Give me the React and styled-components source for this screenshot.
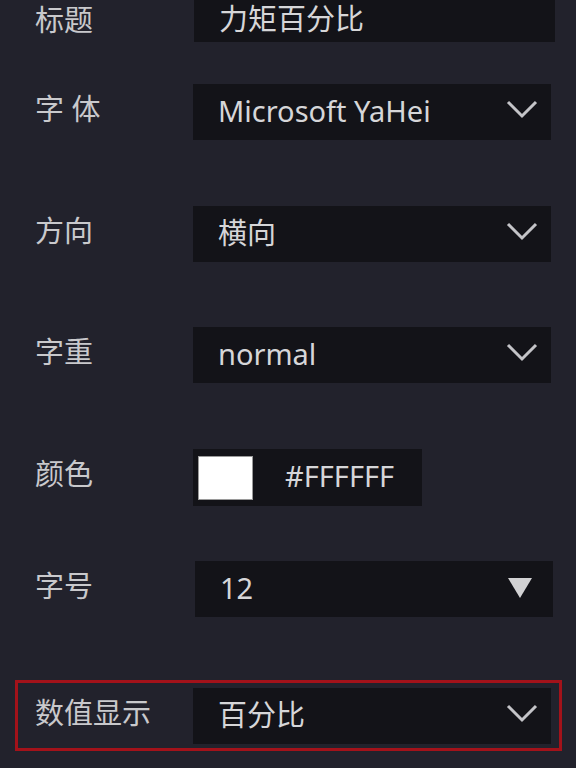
import React from 'react'
import styled, { createGlobalStyle } from 'styled-components'

const GlobalStyle = createGlobalStyle`
  html, body {
    margin: 0;
    padding: 0;
    background: #22222c;
    overflow: hidden;
  }
  body {
    font-family: "Noto Sans", "Noto Sans CJK SC", sans-serif;
  }
`

const Panel = styled.div`
  width: 576px;
  height: 768px;
  overflow: hidden;
  background: #22222c;
`

const Row = styled.div`
  display: flex;
  align-items: center;
  margin-top: ${(p) => p.$top}px;
  margin-left: ${(p) => (p.$hl ? 15 : 0)}px;
  width: ${(p) => (p.$hl ? 547 : 576)}px;
  box-sizing: border-box;
  padding: ${(p) => (p.$hl ? '5px 0 4px 17px' : '0 0 0 35px')};
  border: ${(p) => (p.$hl ? '3px solid #a3121a' : 'none')};
`

const Label = styled.div`
  width: 158px;
  flex: none;
  font-size: 29px;
  color: #c9c9cc;
  line-height: 1;
  margin-top: ${(p) => p.$lift ?? -8}px;
  white-space: pre;
`

const Box = styled.div`
  display: flex;
  align-items: center;
  box-sizing: border-box;
  width: ${(p) => p.$w || 358}px;
  height: ${(p) => p.$h || 56}px;
  margin-left: ${(p) => p.$shift || 0}px;
  padding: 0 ${(p) => p.$pr || 13}px 0 25px;
  background: #131318;
  color: #d6d6d8;
  font-size: 29px;
  line-height: 1;
`

const Value = styled.span`
  flex: 1;
  margin-top: ${(p) => p.$lift ?? -4}px;
`

const Swatch = styled.div`
  width: 55px;
  height: 44px;
  flex: none;
  margin-left: -20px;
  background: #fff;
  border: 1px solid #9a9a9a;
  box-sizing: border-box;
`

const Hex = styled.span`
  margin-left: 32px;
  margin-top: -4px;
`

const Chevron = () => (
  <svg width="32" height="20" viewBox="0 0 32 20" style={{ marginTop: -6 }}>
    <polyline
      points="2,3 16,17 30,3"
      fill="none"
      stroke="#c4c4c8"
      strokeWidth="3"
    />
  </svg>
)

const Triangle = () => (
  <svg width="24" height="20" viewBox="0 0 24 20" style={{ marginTop: -2 }}>
    <polygon points="0,0 24,0 12,20" fill="#d2d2d4" />
  </svg>
)

const Select = ({ value, icon = 'chevron', shift }) => (
  <Box $shift={shift} $pr={icon === 'triangle' ? 21 : 13}>
    <Value>{value}</Value>
    {icon === 'triangle' ? <Triangle /> : <Chevron />}
  </Box>
)

const App = () => (
  <Panel>
    <GlobalStyle />
    <Row $top={0}>
      <Label $lift={-4}>标题</Label>
      <Box $w={361} $h={42} $shift={1}>
        <Value $lift={-6}>力矩百分比</Value>
      </Box>
    </Row>
    <Row $top={42}>
      <Label>字 体</Label>
      <Select value="Microsoft YaHei" />
    </Row>
    <Row $top={66}>
      <Label>方向</Label>
      <Select value="横向" />
    </Row>
    <Row $top={65}>
      <Label>字重</Label>
      <Select value="normal" />
    </Row>
    <Row $top={66}>
      <Label>颜色</Label>
      <Box $w={229} $h={57}>
        <Swatch />
        <Hex>#FFFFFF</Hex>
      </Box>
    </Row>
    <Row $top={55}>
      <Label>字号</Label>
      <Select value="12" icon="triangle" shift={2} />
    </Row>
    <Row $top={63} $hl>
      <Label>数值显示</Label>
      <Select value="百分比" />
    </Row>
  </Panel>
)

export default App
